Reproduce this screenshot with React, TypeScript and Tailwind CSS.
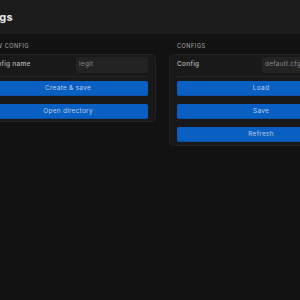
import React from "react";

function Btn({ children }: { children: React.ReactNode }) {
  return (
    <button className="h-[15px] w-full rounded-[2px] bg-[#0a5fc2] border-b border-[#0852a8] text-[6.5px] leading-[14px] font-normal text-[#bccde6] tracking-[0.04em]">
      {children}
    </button>
  );
}

function Row({ label, value, inputW }: { label: string; value: string; inputW: string }) {
  return (
    <div className="flex items-center justify-between h-[20px] pb-[3px] border-b border-[#262626] mb-[4px]">
      <span className="text-[6.5px] font-medium text-[#b5b5b5] tracking-[0.04em]">{label}</span>
      <div className={`${inputW} h-[16px] rounded-[3px] bg-[#232323] flex items-center pl-[3px] text-[6.5px] text-[#8a8a8a] tracking-[0.04em]`}>
        {value}
      </div>
    </div>
  );
}

export default function App() {
  return (
    <div
      className="w-[300px] h-[300px] overflow-hidden bg-[#121212]"
      style={{ fontFamily: "Inter, 'Noto Sans', sans-serif" }}
    >
      <div className="h-[34px] bg-[#1b1b1b] flex items-center">
        <span className="ml-[-34px] shrink-0 text-[11px] font-bold text-[#e8e8e8] tracking-[0.03em]">Settings</span>
      </div>
      <div className="flex gap-[13px] ml-[-20px] pt-[8px]">
        <div className="w-[176px] shrink-0">
          <div className="h-[9px] leading-[9px] mb-[3px] pl-[8px] text-[5.5px] font-medium uppercase tracking-[0.1em] text-[#9a9a9a]">New config</div>
          <div className="rounded-[4px] border border-[#222222] bg-[#191919] px-[7px] pt-[2px] pb-[2px]">
            <Row label="Config name" value="legit" inputW="w-[72px]" />
            <div className="flex flex-col gap-[8px]">
              <Btn>Create &amp; save</Btn>
              <Btn>Open directory</Btn>
            </div>
          </div>
        </div>
        <div className="w-[184px] shrink-0">
          <div className="h-[9px] leading-[9px] mb-[3px] pl-[8px] text-[5.5px] font-medium uppercase tracking-[0.1em] text-[#9a9a9a]">Configs</div>
          <div className="rounded-[4px] border border-[#222222] bg-[#191919] px-[7px] pt-[2px] pb-[3px]">
            <Row label="Config" value="default.cfg" inputW="w-[83px]" />
            <div className="flex flex-col gap-[8px]">
              <Btn>Load</Btn>
              <Btn>Save</Btn>
              <Btn>Refresh</Btn>
            </div>
          </div>
        </div>
      </div>
    </div>
  );
}
